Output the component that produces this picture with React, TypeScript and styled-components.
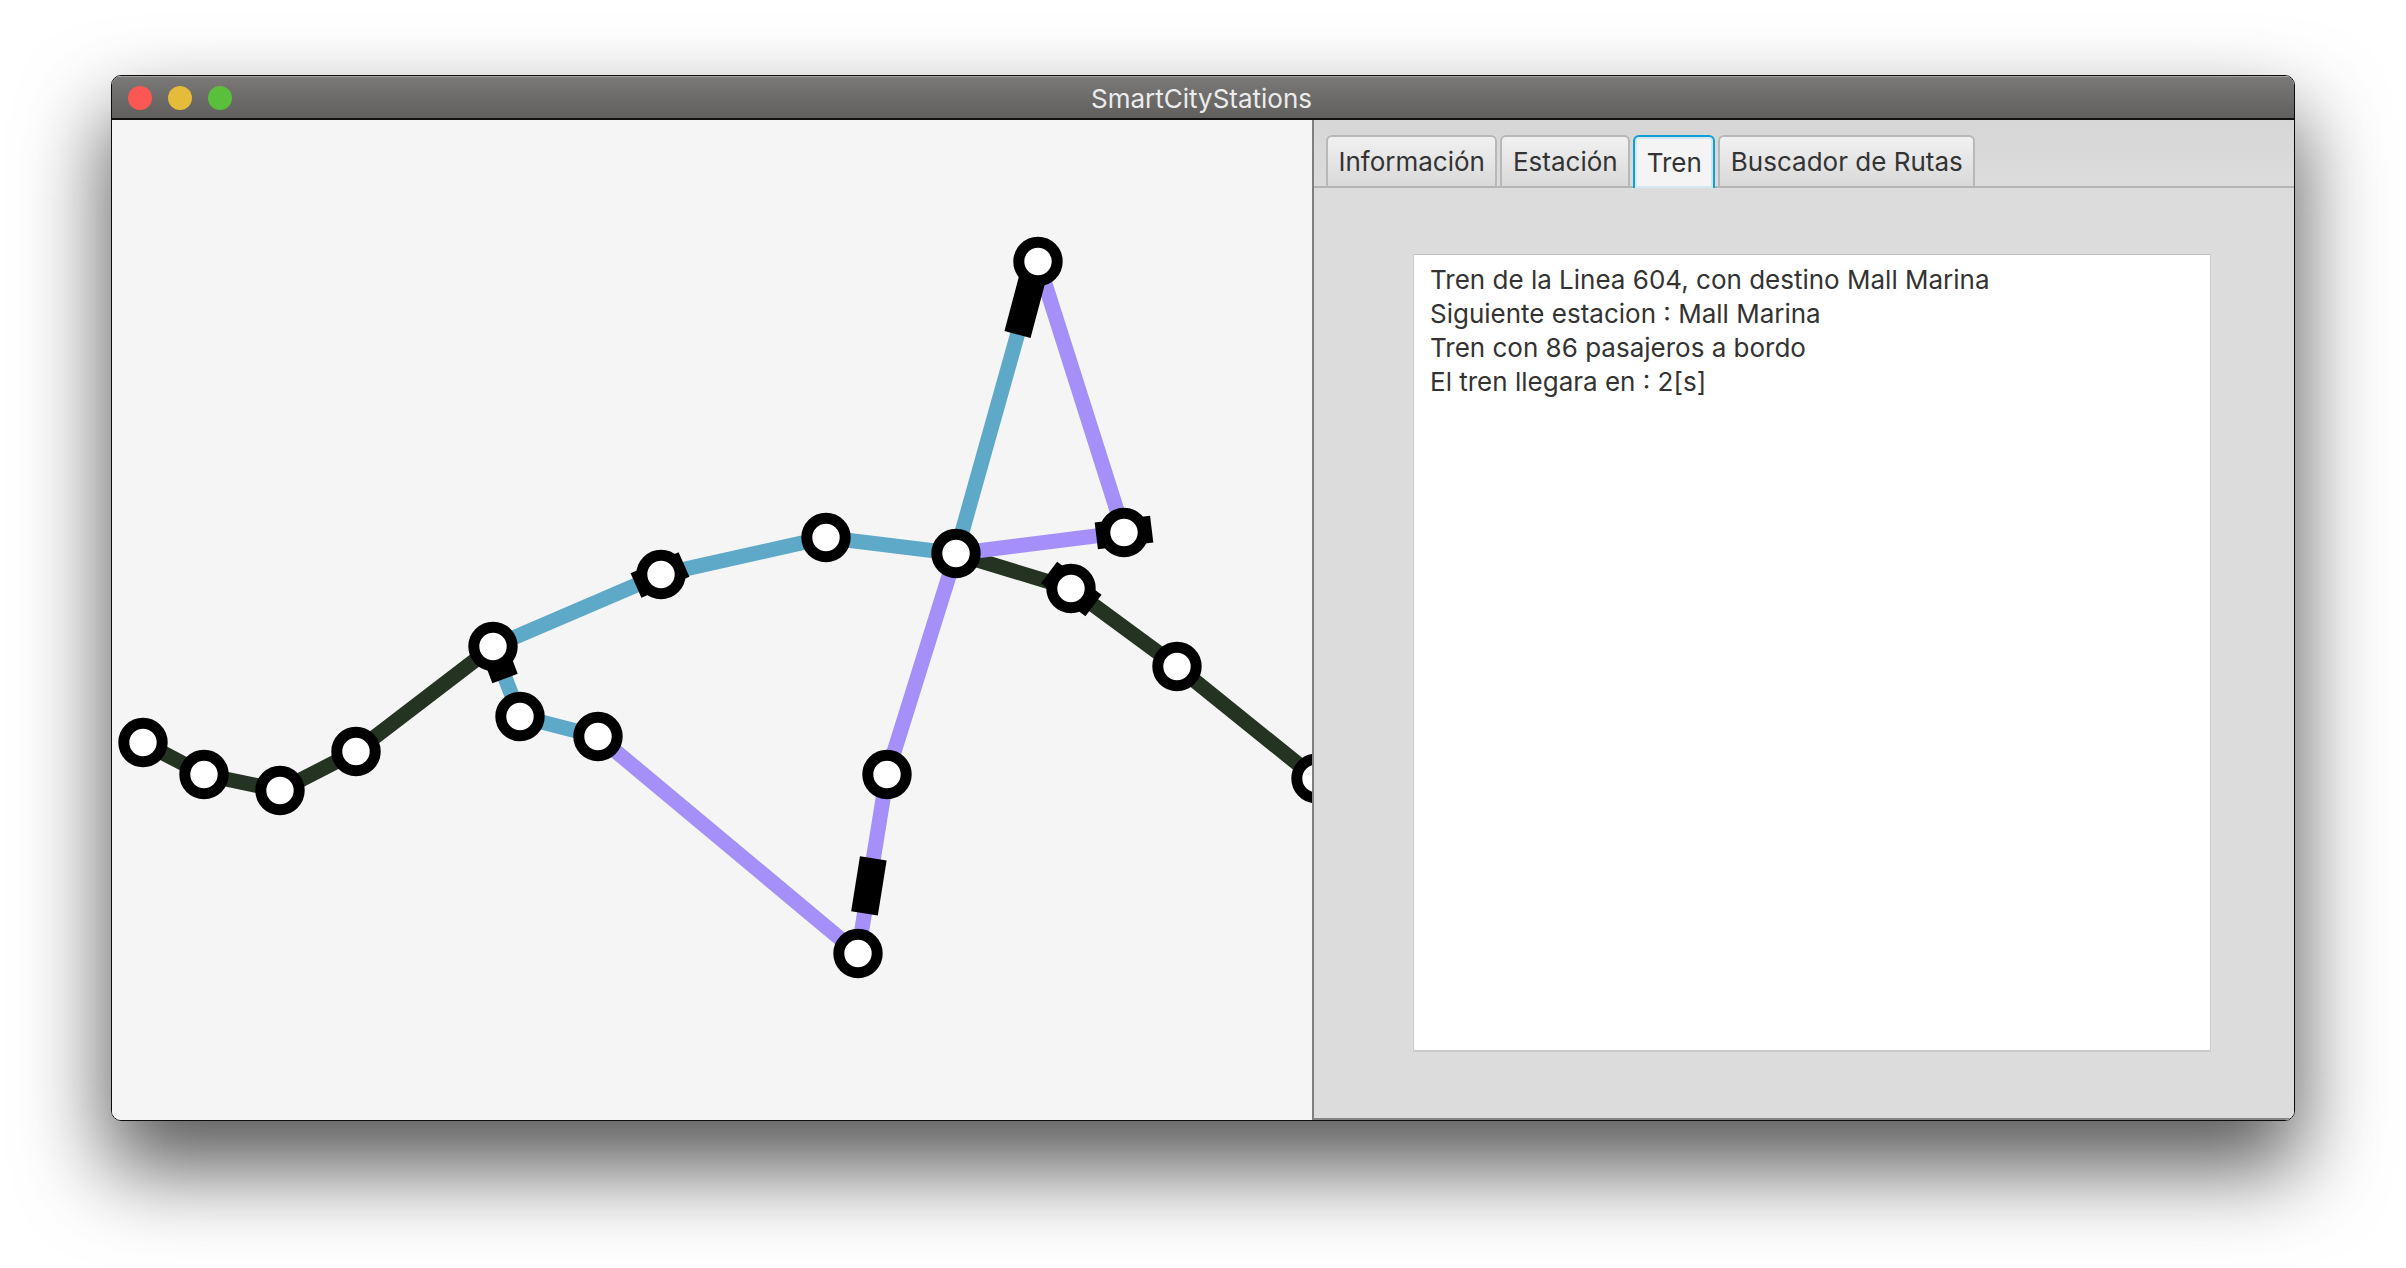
import React from "react";
import styled, { createGlobalStyle } from "styled-components";

const GlobalStyle = createGlobalStyle`
  html, body {
    margin: 0;
    padding: 0;
    background: #fff;
  }
`;

const Desktop = styled.div`
  width: 2406px;
  height: 1268px;
  padding: 75px 0 0 111px;
  box-sizing: border-box;
  overflow: hidden;
  font-family: Inter, Roboto, "Liberation Sans", sans-serif;
`;

const Window = styled.div`
  width: 2184px;
  height: 1046px;
  box-sizing: border-box;
  display: flex;
  flex-direction: column;
  border: 1.5px solid #0c0c0c;
  border-radius: 10px;
  overflow: hidden;
  box-shadow: 0 44px 85px 4px rgba(0, 0, 0, 0.65);
`;

const TitleBar = styled.div`
  flex: 0 0 44px;
  display: grid;
  grid-template-columns: 1fr auto 1fr;
  align-items: center;
  padding-right: 3px;
  box-sizing: border-box;
  background: linear-gradient(#7b7977, #605f5d);
  border-top: 1px solid #a5a4a2;
  border-bottom: 2px solid #111;
`;

const Lights = styled.div`
  display: flex;
  gap: 16px;
  padding-left: 16px;
`;

const Light = styled.span<{ $color: string }>`
  width: 24px;
  height: 24px;
  border-radius: 50%;
  background: ${(p) => p.$color};
`;

const Title = styled.div`
  padding-top: 2px;
  color: #ececec;
  font-size: 26px;
`;

const Body = styled.div`
  flex: 1;
  min-height: 0;
  display: flex;
`;

const Canvas = styled.div`
  flex: 0 0 1200px;
  background: #f5f5f5;
  overflow: hidden;
  border-right: 2px solid #7f7f7f;
`;

const MapSvg = styled.svg`
  display: block;
`;

const SidePanel = styled.div`
  flex: 1;
  display: flex;
  flex-direction: column;
  background: #dcdcdc;
  border-bottom: 2px solid #858585;
`;

const TabHeader = styled.div`
  flex: 0 0 68px;
  box-sizing: border-box;
  display: flex;
  align-items: flex-end;
  gap: 3px;
  padding-left: 12px;
  background: linear-gradient(#d6d6d6, #dcdcdc);
  border-bottom: 2px solid #b5b5b5;
`;

const Tab = styled.div<{ $active?: boolean }>`
  height: 53px;
  margin-bottom: -2px;
  padding: 0 ${(p) => (p.$active ? "11.5px" : "10.5px")};
  box-sizing: border-box;
  display: flex;
  align-items: center;
  font-size: 26px;
  color: #333;
  border-radius: 6px 6px 0 0;
  border: 2px solid ${(p) => (p.$active ? "#0d9fd6" : "#b8b8b8")};
  border-bottom: ${(p) => (p.$active ? "none" : "2px solid #b5b5b5")};
  background: ${(p) =>
    p.$active ? "#f4f4f4" : "linear-gradient(#f1f1f1, #d9d9d9)"};
  box-shadow: ${(p) => (p.$active ? "inset 0 0 0 2px #d4e8f1" : "none")};
`;

const TabContent = styled.div`
  flex: 1;
  min-height: 0;
  padding: 66px 83px 66px 99px;
`;

const InfoBox = styled.div`
  height: 100%;
  box-sizing: border-box;
  padding: 8px 16px;
  background: #fff;
  border: 1px solid #cacaca;
  border-top-color: #bdbdbd;
  border-bottom: 2px solid #cacaca;
  border-radius: 2px;
  font-size: 26px;
  line-height: 34px;
  color: #333;
`;

const LINE_BLUE = "#5ea9c8";
const LINE_PURPLE = "#a58ff8";
const LINE_DARK = "#253322";

const lines = [
  {
    color: LINE_DARK,
    points: "143,742 204,774 280,790 356,751 493,646",
  },
  {
    color: LINE_DARK,
    points: "956,553 1071,588 1177,666 1316,778",
  },
  {
    color: LINE_BLUE,
    points: "598,736 520,716 493,646 661,574 826,537 956,553 1038,261",
  },
  {
    color: LINE_PURPLE,
    points: "598,736 858,953 887,774 956,553 1124,532 1038,261",
  },
];

// tren = [x1, y1, x2, y2]
const trains = [
  [1017.5, 334, 1035, 268],
  [873.3, 857.8, 864.5, 912.8],
  [1096.3, 535.4, 1151.7, 528.7],
  [1049, 572, 1093.5, 605],
  [636, 585, 684, 564],
  [493, 646, 505, 678],
];

const stations = [
  [143, 742],
  [204, 774],
  [280, 790],
  [356, 751],
  [493, 646],
  [520, 716],
  [598, 736],
  [661, 574],
  [826, 537],
  [956, 553],
  [1038, 261],
  [1124, 532],
  [1071, 588],
  [1177, 666],
  [1316, 778],
  [887, 774],
  [858, 953],
];

function CityMap() {
  return (
    <MapSvg width="1200" height="999" viewBox="112 119.5 1200 999">
      {lines.map((l) => (
        <polyline
          key={l.points}
          points={l.points}
          fill="none"
          stroke={l.color}
          strokeWidth="15"
        />
      ))}
      {trains.map(([x1, y1, x2, y2]) => (
        <line
          key={`${x1}-${y1}`}
          x1={x1}
          y1={y1}
          x2={x2}
          y2={y2}
          stroke="#000"
          strokeWidth="27"
        />
      ))}
      {stations.map(([x, y]) => (
        <circle
          key={`${x}-${y}`}
          cx={x}
          cy={y}
          r="19.2"
          fill="#fff"
          stroke="#000"
          strokeWidth="11"
        />
      ))}
    </MapSvg>
  );
}

export default function App() {
  return (
    <Desktop>
      <GlobalStyle />
      <Window>
        <TitleBar>
          <Lights>
            <Light $color="#fc5753" />
            <Light $color="#e4bc3a" />
            <Light $color="#5abf3b" />
          </Lights>
          <Title>SmartCityStations</Title>
        </TitleBar>
        <Body>
          <Canvas>
            <CityMap />
          </Canvas>
          <SidePanel>
            <TabHeader>
              <Tab>Información</Tab>
              <Tab>Estación</Tab>
              <Tab $active>Tren</Tab>
              <Tab>Buscador de Rutas</Tab>
            </TabHeader>
            <TabContent>
              <InfoBox>
                Tren de la Linea 604, con destino Mall Marina
                <br />
                Siguiente estacion : Mall Marina
                <br />
                Tren con 86 pasajeros a bordo
                <br />
                El tren llegara en : 2[s]
              </InfoBox>
            </TabContent>
          </SidePanel>
        </Body>
      </Window>
    </Desktop>
  );
}
